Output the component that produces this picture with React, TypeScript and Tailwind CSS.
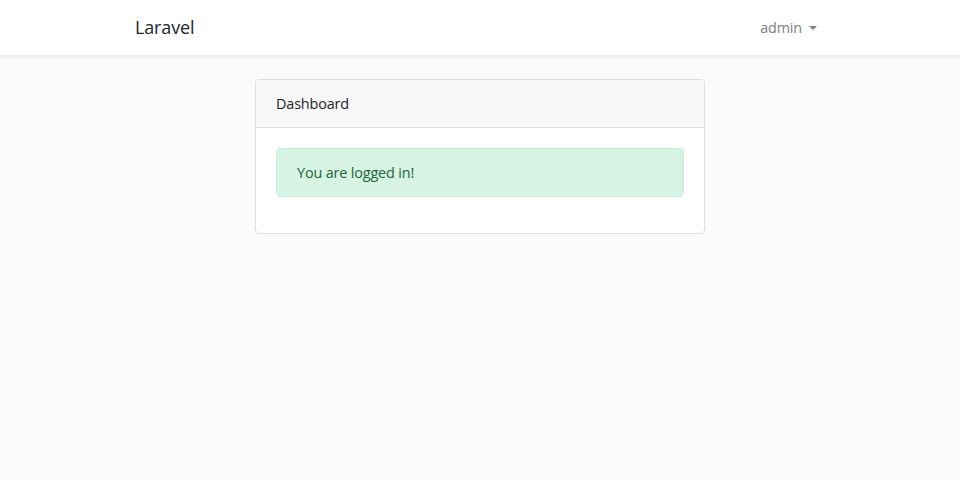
export default function App() {
  return (
    <div
      className="min-h-[480px] bg-[#f8fafc] text-[14.4px] leading-[1.6] tracking-[-0.15px] text-[#212529]"
      style={{ fontFamily: '"Open Sans", "Noto Sans", sans-serif' }}
    >
      {/* Navbar */}
      <nav className="h-[55px] bg-white shadow-[0_2px_4px_rgba(0,0,0,0.075)]">
        <div className="mx-auto flex h-full w-[720px] items-center justify-between px-[15px]">
          <a className="text-[18px] text-[#212529]">Laravel</a>
          <a className="flex items-center px-2 text-[#808080]">
            admin
            <span className="ml-[7px] mt-[1px] h-0 w-0 border-x-[4.3px] border-t-[4.3px] border-x-transparent border-t-[#808080]"></span>
          </a>
        </div>
      </nav>

      {/* Main */}
      <main className="py-6">
        <div className="mx-auto w-[720px] px-[15px]">
          <div className="flex justify-center">
            <div className="w-[450px] rounded border border-[#dfdfdf] bg-white">
              <div className="border-b border-[#dfdfdf] bg-[#f7f7f7] px-5 py-3">
                Dashboard
              </div>
              <div className="p-5">
                <div className="mb-4 rounded border border-[#c7eed8] bg-[#d7f3e3] px-5 py-3 text-[#1d643b]">
                  You are logged in!
                </div>
              </div>
            </div>
          </div>
        </div>
      </main>
    </div>
  );
}
